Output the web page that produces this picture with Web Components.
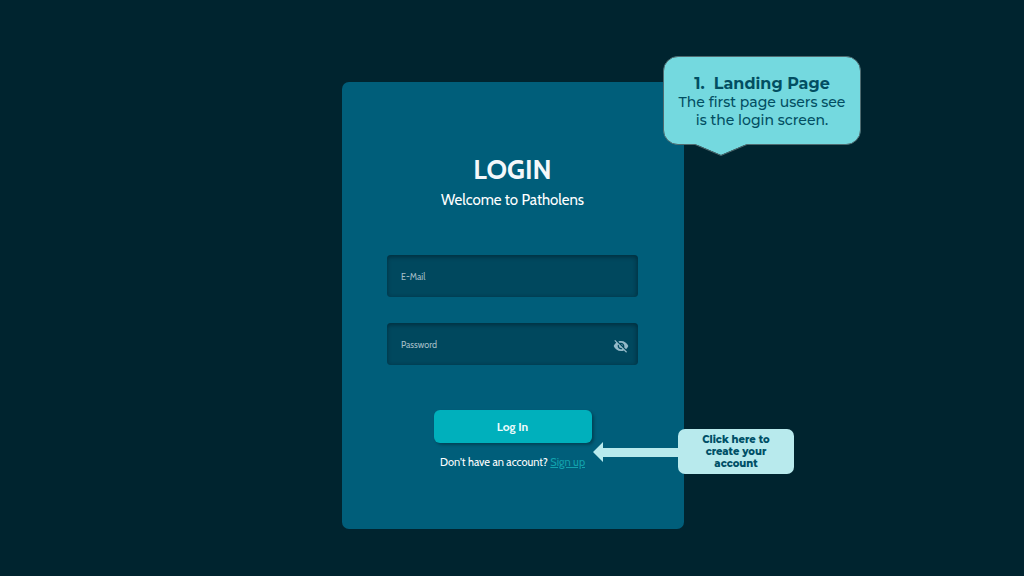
<!DOCTYPE html>
<html lang="en">
<head>
<meta charset="utf-8">
<meta name="viewport" content="width=device-width, initial-scale=1">
<title>Patholens – Login</title>
<style>
  body {
    margin: 0;
    min-height: 100vh;
    background: #00242f;
    font-family: Cabin, Lato, "Open Sans", sans-serif;
  }
</style>
</head>
<body>
<login-page></login-page>

<script>
class LoginPage extends HTMLElement {
  constructor() {
    super();
    this.attachShadow({ mode: "open" }).innerHTML = `
      <style>
        :host { display: flex; justify-content: center; padding: 82px 0 47px 2px; box-sizing: border-box; }
        .stage { position: relative; width: 342px; max-width: 100%; }
        speech-callout { position: absolute; left: 321px; top: -26px; }
        arrow-callout { position: absolute; left: 251px; top: 347px; }
      </style>
      <div class="stage">
        <login-card></login-card>
        <speech-callout>
          <span slot="title">1.&nbsp; Landing Page</span>
          The first page users see<br>is the login screen.
        </speech-callout>
        <arrow-callout>Click here to<br>create your<br>account</arrow-callout>
      </div>`;
  }
}

class LoginCard extends HTMLElement {
  constructor() {
    super();
    this.attachShadow({ mode: "open" }).innerHTML = `
      <style>
        :host { display: block; background: #005e7a; border-radius: 7px; color: #fff; text-align: center; }
        form { display: flex; flex-direction: column; align-items: center; padding: 70px 46px 57px 45px; }
        h1 { margin: 0; font-size: 27px; line-height: 36px; font-weight: 700; color: #f4f8fa; }
        .sub { margin: 0; font-size: 15px; line-height: 24px; }
        .fields { display: grid; gap: 26px; width: 100%; margin: 43px 0 45px; }
        p.signup { margin: 9px 0 0; font-size: 11px; line-height: 20px; }
        a { color: #12a3ae; text-decoration: underline; }
      </style>
      <form>
        <h1>LOGIN</h1>
        <p class="sub">Welcome to Patholens</p>
        <div class="fields">
          <text-field label="E-Mail" type="email"></text-field>
          <text-field label="Password" type="password"></text-field>
        </div>
        <primary-button>Log In</primary-button>
        <p class="signup">Don't have an account? <a href="#signup">Sign up</a></p>
      </form>`;
  }
}

class TextField extends HTMLElement {
  connectedCallback() {
    if (this.shadowRoot) return;
    const label = this.getAttribute("label");
    const type = this.getAttribute("type");
    this.attachShadow({ mode: "open" }).innerHTML = `
      <style>
        :host {
          display: flex; align-items: center; height: 42px; padding: 0 9px 0 14px; box-sizing: border-box;
          background: #00485e; border-radius: 4px;
          box-shadow: inset 0 2px 4px rgba(0, 30, 42, .5), inset -2px 0 4px rgba(0, 30, 42, .2);
        }
        label { display: contents; }
        input {
          flex: 1; min-width: 0; border: 0; padding: 2px 0 0; background: none; outline: none;
          color: #fff; font: 9px/16px Cabin, Lato, "Open Sans", sans-serif;
        }
        input::placeholder { color: #a3bdc6; opacity: 1; }
        button { display: flex; border: 0; padding: 4px 0 0; background: none; cursor: pointer; }
        svg { display: block; width: 16px; height: 16px; fill: #94bac9; }
      </style>
      <label><input type="${type}" placeholder="${label}" aria-label="${label}"></label>
      ${type === "password" ? `<button type="button" aria-label="Show password">
        <svg viewBox="0 0 24 24"><path d="M12 7c2.76 0 5 2.24 5 5 0 .65-.13 1.26-.36 1.83l2.92 2.92c1.51-1.26 2.7-2.89 3.43-4.75-1.73-4.39-6-7.5-11-7.5-1.4 0-2.74.25-3.98.7l2.16 2.16C10.74 7.13 11.35 7 12 7zM2 4.27l2.28 2.28.46.46C3.08 8.3 1.78 10.02 1 12c1.73 4.39 6 7.5 11 7.5 1.55 0 3.03-.3 4.38-.84l.42.42L19.73 22 21 20.73 3.27 3 2 4.27zM7.53 9.8l1.55 1.55c-.05.21-.08.43-.08.65 0 1.66 1.34 3 3 3 .22 0 .44-.03.65-.08l1.55 1.55c-.67.33-1.41.53-2.2.53-2.76 0-5-2.24-5-5 0-.79.2-1.53.53-2.2zm4.31-.78l3.15 3.15.02-.16c0-1.66-1.34-3-3-3l-.17.01z"/></svg>
      </button>` : ""}`;
  }
}

class PrimaryButton extends HTMLElement {
  constructor() {
    super();
    this.attachShadow({ mode: "open" }).innerHTML = `
      <style>
        :host { display: block; width: 158px; }
        button {
          width: 100%; height: 33px; border: 0; padding: 0; border-radius: 6px; cursor: pointer;
          background: #00b0bc; color: #effcfd; box-shadow: 2px 2px 3px rgba(0, 36, 47, .45);
          font: 700 12px/16px Cabin, Lato, "Open Sans", sans-serif;
        }
      </style>
      <button type="button"><slot></slot></button>`;
  }
}

class SpeechCallout extends HTMLElement {
  constructor() {
    super();
    this.attachShadow({ mode: "open" }).innerHTML = `
      <style>
        :host { display: block; width: 198px; color: #024e62; font: 500 14px/18px Montserrat, Inter, sans-serif; text-align: center; }
        .bubble { box-sizing: border-box; padding: 18px 0 15px; border: 1px solid #4f6b70; border-radius: 15px; background: #74d9df; white-space: nowrap; }
        .title { font-size: 16px; font-weight: 700; }
        svg { display: block; width: 52px; height: 12px; margin: -1px 0 0 32px; position: relative; }
      </style>
      <div class="bubble">
        <div class="title"><slot name="title"></slot></div>
        <slot></slot>
      </div>
      <svg viewBox="0 0 52 12"><path d="M0 0 26 11 52 0z" fill="#74d9df"/><path d="M0 .5 26 11.500 52 .5" fill="none" stroke="#4f6b70"/></svg>`;
  }
}

class ArrowCallout extends HTMLElement {
  constructor() {
    super();
    this.attachShadow({ mode: "open" }).innerHTML = `
      <style>
        :host { display: flex; align-items: center; color: #005067; }
        svg { display: block; width: 85px; height: 20px; fill: #b8eaed; }
        .note {
          box-sizing: border-box; width: 116px; padding: 5px 0 4px; border-radius: 7px; background: #b8eaed;
          font: 800 10px/12px Montserrat, Inter, sans-serif; text-align: center; white-space: nowrap;
        }
      </style>
      <svg viewBox="0 0 85 20"><path d="M0 10 10 0V6H85V15H10V20z"/></svg>
      <div class="note"><slot></slot></div>`;
  }
}

customElements.define("text-field", TextField);
customElements.define("primary-button", PrimaryButton);
customElements.define("login-card", LoginCard);
customElements.define("speech-callout", SpeechCallout);
customElements.define("arrow-callout", ArrowCallout);
customElements.define("login-page", LoginPage);
</script>
</body>
</html>
